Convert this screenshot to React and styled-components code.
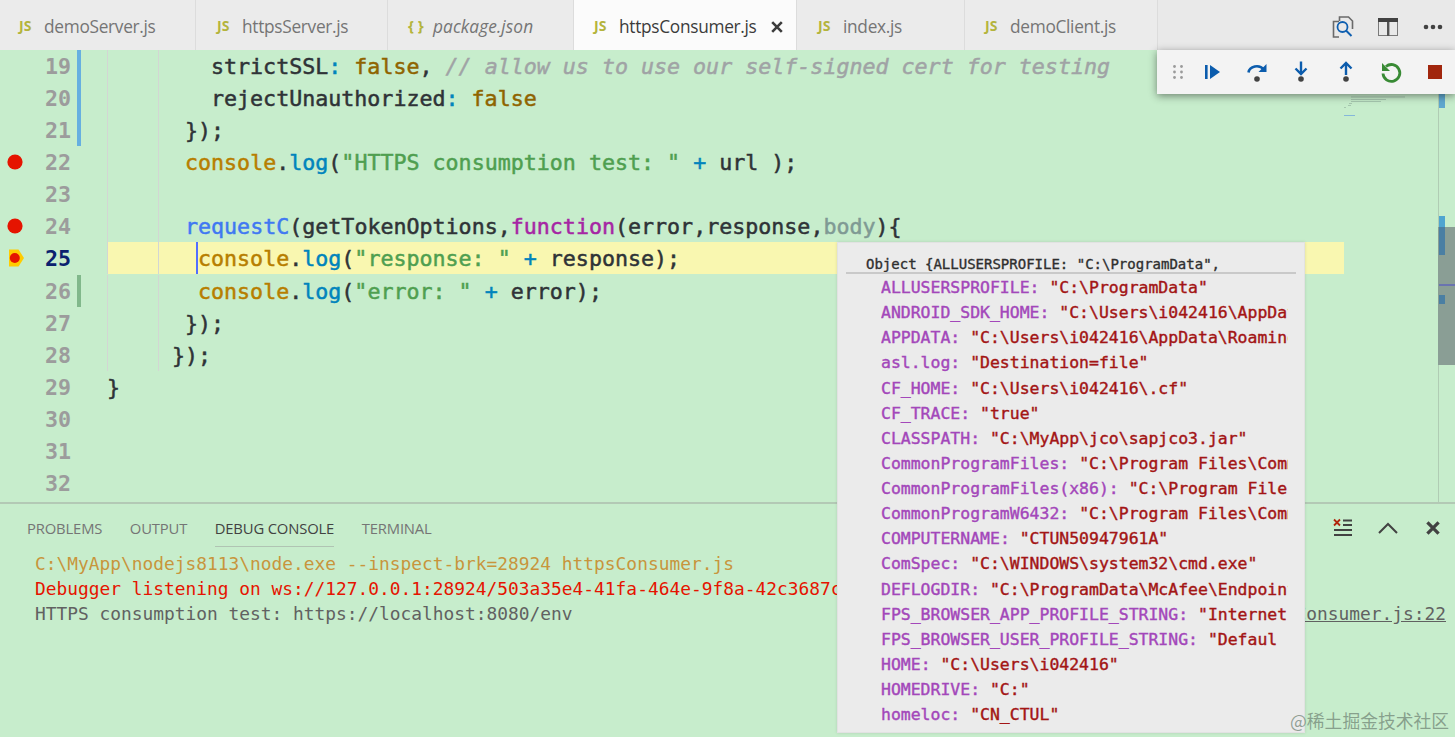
import React from "react";
import styled, { createGlobalStyle } from "styled-components";

const mono = `"DejaVu Sans Mono", "Liberation Mono", monospace`;
const sans = `"Open Sans", "Noto Sans", sans-serif`;

const Global = createGlobalStyle`
  html, body { margin: 0; padding: 0; background: #c7edcc; overflow: hidden; }
  * { box-sizing: border-box; }
`;

const Page = styled.div`
  position: relative; width: 1455px; height: 737px; overflow: hidden;
  display: flex; flex-direction: column; background: #c7edcc;
`;

/* tabs */
const TabBar = styled.div`display: flex; height: 50px; background: #e9e9e9; flex: none;`;
const Tab = styled.div`
  width: ${p => p.$w}px; height: 50px; flex: none; display: flex; align-items: center;
  padding-left: ${p => p.$pl || 20}px; padding-top: 3px; font: ${p => (p.$italic ? "italic " : "")}400 17.3px ${sans};
  letter-spacing: ${p => (p.$italic ? "0.08px" : "-0.3px")};
  color: ${p => (p.$active ? "#3b3b3b" : "#757575")};
  background: ${p => (p.$active ? "#fbfbfb" : "#ebebeb")};
  border-right: 1px solid #dcdcdc; white-space: nowrap;
`;
const FileIcon = styled.span`
  width: 25px; flex: none; font: normal 700 ${p => (p.$brace ? 15 : 14)}px ${sans}; color: #b4b43c; letter-spacing: 0;
  margin-top: -3px;
`;
const TabClose = styled.span`margin-left: 14px; flex: none; display: flex;`;
const TabActions = styled.div`
  margin-left: auto; display: flex; align-items: center; height: 50px;
`;
const ActionSlot = styled.div`
  width: 45px; height: 50px; display: flex; align-items: center; justify-content: center; padding-top: 4px;
`;

/* editor */
const Editor = styled.div`display: flex; height: 452px; flex: none; overflow: hidden;`;
const Lines = styled.div`width: 1344px; flex: none; display: flex; flex-direction: column;`;
const Line = styled.div`
  display: flex; height: 32px; flex: none; margin-top: ${p => (p.$nudge ? 1 : 0)}px;
`;
const Gutter = styled.div`width: 107px; height: 32px; flex: none; display: flex; align-items: center;`;
const BreakSlot = styled.div`width: 30px; flex: none; display: flex; justify-content: center; align-items: center;`;
const LineNo = styled.div`
  width: 41px; text-align: right; flex: none; font: 700 21.65px/34px ${mono}; height: 32px;
  color: ${p => (p.$active ? "#0b216f" : "#9c9c9c")};
`;
const ChangeBar = styled.div`
  width: 4px; height: 32px; margin-left: 6px; flex: none;
  background: ${p => (p.$kind === "mod" ? "#66afe0" : p.$kind === "add" ? "#81b88b" : "transparent")};
`;
const CodeArea = styled.div`
  flex: 1; height: 32px; padding-left: ${p => p.$indent * 13}px; white-space: pre;
  font: 400 21.65px/34px ${mono}; color: #2f3337; -webkit-text-stroke: 0.5px currentColor;
  background-color: ${p => (p.$current ? "#f9f7b0" : "transparent")};
  background-image: ${p => (p.$guides
    ? "linear-gradient(#d3d6d3,#d3d6d3),linear-gradient(#d3d6d3,#d3d6d3)"
    : "none")};
  background-size: 1px 100%, 1px 100%;
  background-position: 0 0, 51px 0;
  background-repeat: no-repeat;
  box-shadow: ${p => (p.$nudge && p.$guides ? "none" : "none")};
`;
const Cursor = styled.span`
  display: inline-block; width: 2px; height: 32px; margin-left: -2px; background: #526fff;
  vertical-align: top;
`;
const Tok = styled.span`
  color: ${p => p.$c};
  font-style: ${p => (p.$i ? "italic" : "normal")};
`;
const C = {
  op: "#0184bc", bool: "#8f6400", comment: "#a0a3a5", obj: "#b77e00", fn: "#0184bc",
  str: "#4f9f50", call: "#4078f2", kw: "#a626a4", dim: "#7f9a94",
};
const MinimapCol = styled.svg`width: 94px; height: 452px; flex: none; display: block;`;
const ScrollCol = styled.svg`width: 17px; height: 452px; flex: none; display: block;`;

/* debug toolbar */
const DebugBar = styled.div`
  position: absolute; left: 1157px; top: 50px; width: 298px; height: 44px; background: #f3f3f3;
  display: flex; align-items: center; box-shadow: 0 2px 8px rgba(0,0,0,.45);
`;
const Grip = styled.div`width: 33px; flex: none; display: flex; justify-content: center; padding-left: 9px;`;
const DebugBtn = styled.div`width: 44.6px; height: 44px; flex: none; display: flex; align-items: center; justify-content: center;`;

/* panel */
const Panel = styled.div`flex: 1; border-top: 2px solid #b3c9b5; display: flex; flex-direction: column;`;
const PanelHead = styled.div`height: 47px; flex: none; display: flex; padding-left: 27px;`;
const PanelTab = styled.div`
  margin-right: 27.5px; height: 43px; padding-top: 13.5px; font: 400 14.8px/20px ${sans}; letter-spacing: -0.15px;
  color: ${p => (p.$active ? "#424242" : "#757575")};
  border-bottom: 1px solid ${p => (p.$active ? "#b0c4b3" : "transparent")};
`;
const PanelActions = styled.div`margin-left: auto; display: flex;`;
const PanelAction = styled.div`width: 45px; height: 47px; display: flex; align-items: center; justify-content: center;`;
const Console = styled.div`padding: 0 9px 0 35px; font: 400 17.86px/25.1px ${mono};`;
const ConsoleLine = styled.div`
  display: flex; justify-content: space-between; white-space: nowrap; color: ${p => p.$c};
`;
const SourceLink = styled.span`text-decoration: underline; color: #616161;`;

/* hover */
const Hover = styled.div`
  position: absolute; left: 837px; top: 242px; width: 468px; height: 491px; background: #ebebeb;
  border: 1px solid #e2e2e2; overflow: hidden; padding: 0 8px;
  box-shadow: 0 0 3px rgba(0,0,0,.12);
`;
const HoverHead = styled.div`
  height: 31px; padding: 12px 0 0 20px; border-bottom: 2px solid #c9c9c9; white-space: pre; overflow: hidden;
  font: 400 14px/18px ${mono}; color: #2f2f2f; -webkit-text-stroke: 0.35px currentColor;
`;
const HoverBody = styled.div`padding: 1px 0 0 35px;`;
const HoverRow = styled.div`
  width: 407px; height: 25.13px; overflow: hidden; white-space: pre;
  font: 400 16.47px/25.13px ${mono}; -webkit-text-stroke: 0.4px currentColor;
`;
const Key = styled.span`color: #a347ba;`;
const Val = styled.span`color: #a31515;`;

const Watermark = styled.div`
  position: absolute; left: 1290px; top: 709px; white-space: nowrap;
  font: 400 17.8px/22px "Noto Sans CJK SC", sans-serif; color: rgba(110,130,115,.72);
`;

const TABS = [
  { w: 196, pl: 19, name: "demoServer.js" },
  { w: 192, pl: 21, name: "httpsServer.js" },
  { w: 186, name: "package.json", italic: true, icon: "{ }" },
  { w: 223, name: "httpsConsumer.js", active: true },
  { w: 168, pl: 21, name: "index.js" },
  { w: 193, name: "demoClient.js" },
];

const HOVER = [
  ["ALLUSERSPROFILE", '"C:\\ProgramData"'],
  ["ANDROID_SDK_HOME", '"C:\\Users\\i042416\\AppData\\Local\\Android\\Sdk"'],
  ["APPDATA", '"C:\\Users\\i042416\\AppData\\Roaming"'],
  ["asl.log", '"Destination=file"'],
  ["CF_HOME", '"C:\\Users\\i042416\\.cf"'],
  ["CF_TRACE", '"true"'],
  ["CLASSPATH", '"C:\\MyApp\\jco\\sapjco3.jar"'],
  ["CommonProgramFiles", '"C:\\Program Files\\Common Files"'],
  ["CommonProgramFiles(x86)", '"C:\\Program Files (x86)\\Common Files"'],
  ["CommonProgramW6432", '"C:\\Program Files\\Common Files"'],
  ["COMPUTERNAME", '"CTUN50947961A"'],
  ["ComSpec", '"C:\\WINDOWS\\system32\\cmd.exe"'],
  ["DEFLOGDIR", '"C:\\ProgramData\\McAfee\\Endpoint Security"'],
  ["FPS_BROWSER_APP_PROFILE_STRING", '"Internet Explorer"'],
  ["FPS_BROWSER_USER_PROFILE_STRING", '"Defaul'],
  ["HOME", '"C:\\Users\\i042416"'],
  ["HOMEDRIVE", '"C:"'],
  ["homeloc", '"CN_CTUL"'],
];

const Breakpoint = () => (
  <svg width="18" height="18" viewBox="0 0 18 18"><circle cx="9" cy="9" r="7.6" fill="#e51400" /></svg>
);
const StackFrame = () => (
  <svg width="18" height="18" viewBox="0 0 18 18">
    <path d="M3 .5h9.5L18 9l-5.5 8.5H3z" fill="#ffcc00" />
    <circle cx="8.8" cy="9" r="5" fill="#e51400" />
  </svg>
);

const CODE = [
  { n: 19, bar: "mod", indent: 8, guides: 1, t: <>strictSSL<Tok $c={C.op}>:</Tok> <Tok $c={C.bool}>false</Tok>, <Tok $c={C.comment} $i>// allow us to use our self-signed cert for testing</Tok></> },
  { n: 20, bar: "mod", indent: 8, guides: 1, t: <>rejectUnauthorized<Tok $c={C.op}>:</Tok> <Tok $c={C.bool}>false</Tok></> },
  { n: 21, bar: "mod", indent: 6, guides: 1, t: <>{"});"}</> },
  { n: 22, bp: <Breakpoint />, indent: 6, guides: 1, t: <><Tok $c={C.obj}>console</Tok>.<Tok $c={C.fn}>log</Tok>(<Tok $c={C.str}>"HTTPS consumption test: "</Tok> <Tok $c={C.op}>+</Tok> url );</> },
  { n: 23, indent: 0, guides: 1, t: "" },
  { n: 24, bp: <Breakpoint />, indent: 6, guides: 1, t: <><Tok $c={C.call}>requestC</Tok>(getTokenOptions,<Tok $c={C.kw}>function</Tok>(error,response,<Tok $c={C.dim}>body</Tok>{"){"}</> },
  { n: 25, bp: <StackFrame />, active: 1, indent: 7, guides: 1, t: <><Cursor /><Tok $c={C.obj}>console</Tok>.<Tok $c={C.fn}>log</Tok>(<Tok $c={C.str}>"response: "</Tok> <Tok $c={C.op}>+</Tok> response);</> },
  { n: 26, nudge: 1, bar: "add", indent: 7, guides: 1, t: <><Tok $c={C.obj}>console</Tok>.<Tok $c={C.fn}>log</Tok>(<Tok $c={C.str}>"error: "</Tok> <Tok $c={C.op}>+</Tok> error);</> },
  { n: 27, indent: 6, guides: 1, t: <>{"});"}</> },
  { n: 28, indent: 5, guides: 1, t: <>{"});"}</> },
  { n: 29, indent: 0, t: "}" },
  { n: 30, indent: 0, t: "" },
  { n: 31, indent: 0, t: "" },
  { n: 32, indent: 0, t: "" },
];

const Close = ({ size = 12, sw = 2.6, color = "#3c3c3c" }) => (
  <svg width={size} height={size} viewBox="0 0 12 12">
    <path d="M1.2 1.2l9.6 9.6M10.8 1.2l-9.6 9.6" stroke={color} strokeWidth={sw} fill="none" />
  </svg>
);

export default function App() {
  return (
    <Page>
      <Global />
      <TabBar>
        {TABS.map(t => (
          <Tab key={t.name} $w={t.w} $pl={t.pl} $active={t.active} $italic={t.italic}>
            <FileIcon $brace={!!t.icon}>{t.icon || "JS"}</FileIcon>
            {t.name}
            {t.active && <TabClose><Close /></TabClose>}
          </Tab>
        ))}
        <TabActions>
          <ActionSlot>
            <svg width="24" height="24" viewBox="0 0 24 24" fill="none">
              <path d="M8 6.5H2.5V22H8" stroke="#6a6a6a" strokeWidth="1.6" />
              <path d="M8.5 6V2h9l4 4v8" stroke="#6a6a6a" strokeWidth="1.6" />
              <circle cx="11.5" cy="12" r="5" stroke="#0f5fb0" strokeWidth="1.8" />
              <path d="M15 15.5l5.5 5.5" stroke="#0f5fb0" strokeWidth="2" />
            </svg>
          </ActionSlot>
          <ActionSlot>
            <svg width="20" height="18" viewBox="0 0 20 18">
              <rect x="0.5" y="0.5" width="19" height="17" fill="#e9e9e9" stroke="#7a7a7a" />
              <rect x="0" y="0" width="20" height="4" fill="#424242" />
              <rect x="9" y="4" width="2.4" height="14" fill="#555" />
            </svg>
          </ActionSlot>
          <ActionSlot>
            <svg width="20" height="6" viewBox="0 0 20 6" fill="#424242">
              <circle cx="3" cy="3" r="2.3" /><circle cx="10" cy="3" r="2.3" /><circle cx="17" cy="3" r="2.3" />
            </svg>
          </ActionSlot>
        </TabActions>
      </TabBar>

      <Editor>
        <Lines>
          {CODE.map(l => (
            <Line key={l.n} $nudge={l.nudge}>
              <Gutter>
                <BreakSlot>{l.bp}</BreakSlot>
                <LineNo $active={l.active}>{l.n}</LineNo>
                <ChangeBar $kind={l.bar} />
              </Gutter>
              <CodeArea $indent={l.indent} $guides={l.guides} $current={l.active}>{l.t}</CodeArea>
            </Line>
          ))}
        </Lines>
        <MinimapCol viewBox="0 0 94 452">
          <g fill="#7f9a8c" opacity=".45">
            <rect x="7" y="46.5" width="54" height="1" />
            <rect x="7" y="49" width="35" height="1" />
            <rect x="7" y="51" width="30" height="1" />
            <rect x="5" y="53" width="3" height="1" />
            <rect x="4" y="55" width="3" height="1" />
            <rect x="0" y="57" width="2" height="1" />
          </g>
          <rect x="0" y="65" width="11" height="1" fill="#6aa0e0" opacity=".7" />
        </MinimapCol>
        <ScrollCol viewBox="0 0 17 452">
          <rect x="0" y="0" width="1" height="452" fill="#b0ccb4" />
          <rect x="1" y="0" width="6" height="58" fill="#5fa8cf" />
          <rect x="1" y="166" width="6" height="39" fill="#4fa5d0" />
          <rect x="0" y="177" width="17" height="138" fill="#8a9e95" />
          <rect x="1" y="177" width="6" height="28" fill="#4a7fa3" />
          <rect x="1" y="234" width="16" height="2" fill="#6a74b0" />
          <rect x="1" y="245" width="6" height="9" fill="#4a7fa3" />
        </ScrollCol>
      </Editor>

      <Panel>
        <PanelHead>
          <PanelTab>PROBLEMS</PanelTab>
          <PanelTab>OUTPUT</PanelTab>
          <PanelTab $active>DEBUG CONSOLE</PanelTab>
          <PanelTab>TERMINAL</PanelTab>
          <PanelActions>
            <PanelAction>
              <svg width="20" height="20" viewBox="0 0 20 20" fill="none">
                <path d="M1 1.5l6 6M7 1.5l-6 6" stroke="#b0240c" strokeWidth="1.8" />
                <path d="M10 2.5h9M10 7h9M1 12h18M1 17h18" stroke="#424242" strokeWidth="2" />
              </svg>
            </PanelAction>
            <PanelAction>
              <svg width="20" height="12" viewBox="0 0 20 12" fill="none">
                <path d="M1 11l9-9 9 9" stroke="#424242" strokeWidth="2" />
              </svg>
            </PanelAction>
            <PanelAction><Close size={14} sw={2.8} color="#424242" /></PanelAction>
          </PanelActions>
        </PanelHead>
        <Console>
          <ConsoleLine $c="#c8953c">C:\MyApp\nodejs8113\node.exe --inspect-brk=28924 httpsConsumer.js</ConsoleLine>
          <ConsoleLine $c="#e51400">Debugger listening on ws://127.0.0.1:28924/503a35e4-41fa-464e-9f8a-42c3687c0a5e</ConsoleLine>
          <ConsoleLine $c="#616161">
            <span>HTTPS consumption test: https://localhost:8080/env</span>
            <SourceLink>httpsConsumer.js:22</SourceLink>
          </ConsoleLine>
        </Console>
      </Panel>

      <DebugBar>
        <Grip>
          <svg width="10" height="14" viewBox="0 0 10 14" fill="#9a9a9a">
            {[1.5, 7, 12.5].flatMap(y => [1.5, 8.5].map(x => <circle key={`${x}-${y}`} cx={x} cy={y} r="1.4" />))}
          </svg>
        </Grip>
        <DebugBtn>
          <svg width="24" height="24" viewBox="0 0 24 24" fill="#0b5cad">
            <rect x="5" y="5" width="2.6" height="14" /><path d="M10 5l10 7-10 7z" />
          </svg>
        </DebugBtn>
        <DebugBtn>
          <svg width="24" height="24" viewBox="0 0 24 24" fill="none">
            <path d="M3.5 12.5C4.5 6.5 14 3.5 19 10" stroke="#0b5cad" strokeWidth="2.6" />
            <path d="M21.5 4v8h-8z" fill="#0b5cad" />
            <circle cx="12" cy="19" r="2.8" fill="#424242" />
          </svg>
        </DebugBtn>
        <DebugBtn>
          <svg width="24" height="24" viewBox="0 0 24 24" fill="none">
            <path d="M12 1.5v12" stroke="#0b5cad" strokeWidth="2.4" />
            <path d="M6.5 8.5l5.5 5.5 5.5-5.5" stroke="#0b5cad" strokeWidth="2.4" />
            <circle cx="12" cy="19" r="2.8" fill="#424242" />
          </svg>
        </DebugBtn>
        <DebugBtn>
          <svg width="24" height="24" viewBox="0 0 24 24" fill="none">
            <path d="M12 3v12" stroke="#0b5cad" strokeWidth="2.4" />
            <path d="M6.5 8.5L12 3l5.5 5.5" stroke="#0b5cad" strokeWidth="2.4" />
            <circle cx="12" cy="19" r="2.8" fill="#424242" />
          </svg>
        </DebugBtn>
        <DebugBtn>
          <svg width="24" height="24" viewBox="0 0 24 24" fill="none">
            <path d="M7 6.5A8.4 8.4 0 1 1 4 13.5" stroke="#388a34" strokeWidth="2.8" />
            <path d="M3 3v8h8z" fill="#388a34" />
          </svg>
        </DebugBtn>
        <DebugBtn>
          <svg width="14" height="14" viewBox="0 0 14 14"><rect width="14" height="14" fill="#a1260d" /></svg>
        </DebugBtn>
      </DebugBar>

      <Hover>
        <HoverHead>{'Object {ALLUSERSPROFILE: "C:\\ProgramData",'}</HoverHead>
        <HoverBody>
          {HOVER.map(([k, v]) => (
            <HoverRow key={k}><Key>{k}:</Key> <Val>{v}</Val></HoverRow>
          ))}
        </HoverBody>
      </Hover>

      <Watermark>@稀土掘金技术社区</Watermark>
    </Page>
  );
}
